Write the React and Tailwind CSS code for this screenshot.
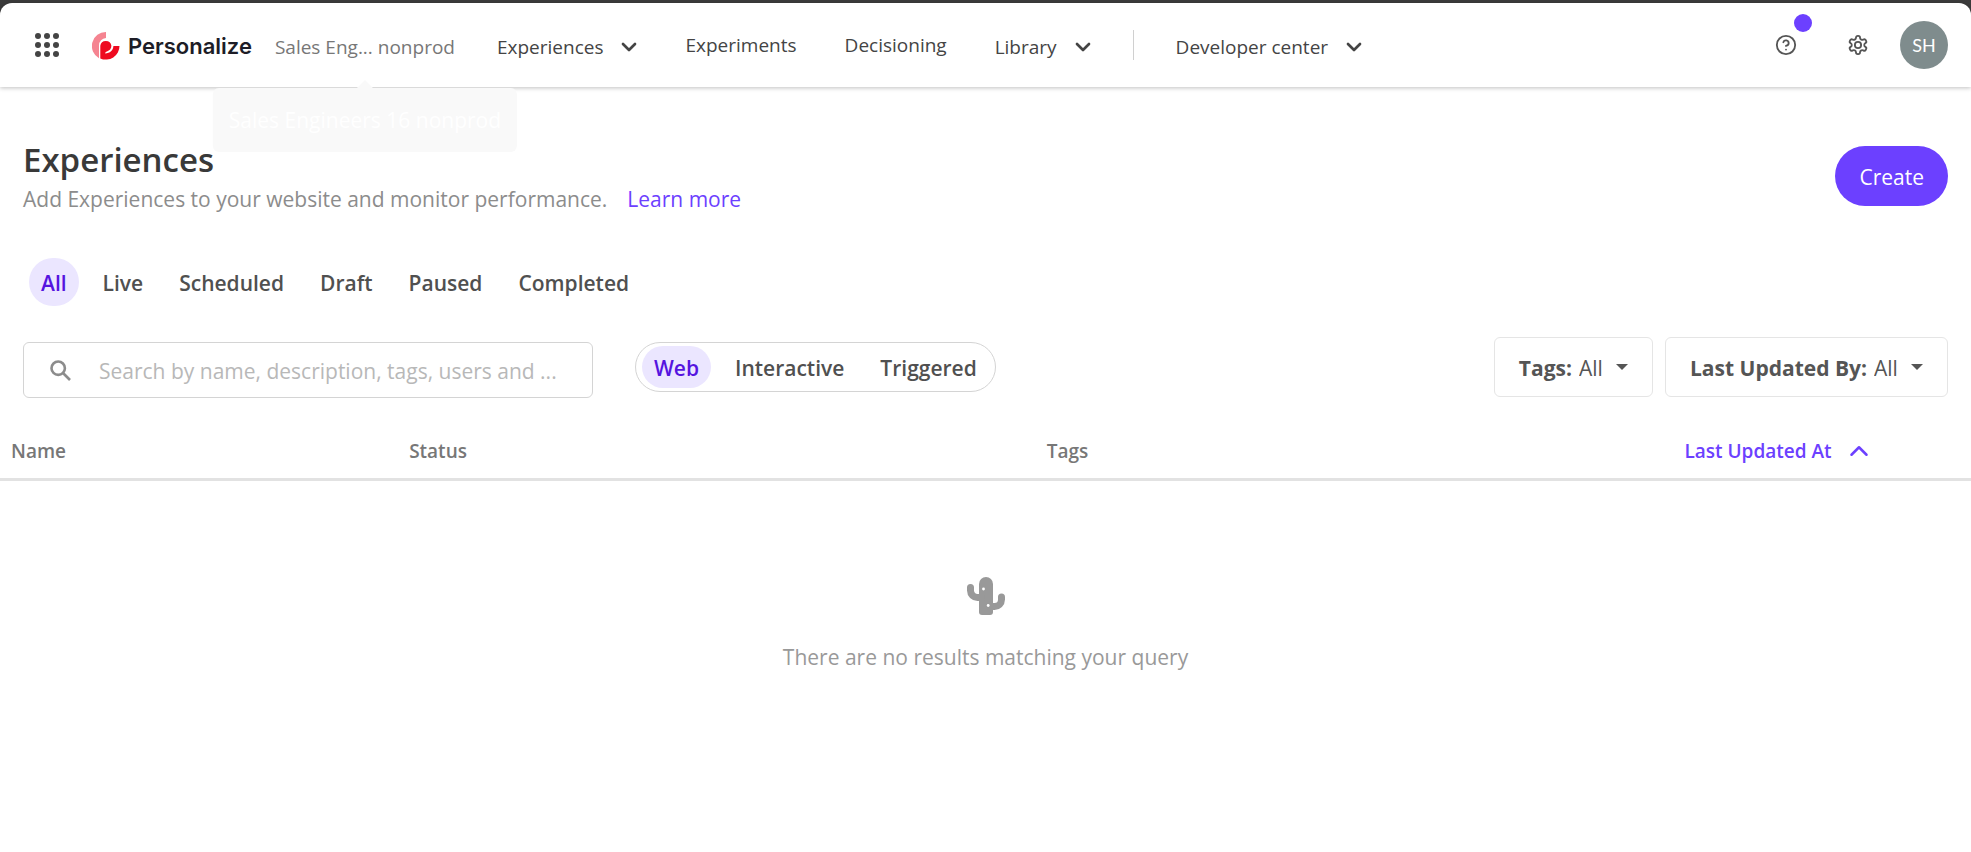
import { ChevronDown, ChevronUp, CircleHelp } from "lucide-react";

function Logo() {
  return (
    <svg viewBox="0 0 28 28" className="size-7" aria-hidden="true">
      <path d="M14 0V6A7.5 7.5 0 0 0 7 13.5V26.2A14 14 0 0 1 14 0Z" fill="#f58491" />
      <path
        d="M8.3 26.4V13.8A5.6 5.6 0 0 1 19.4 13.8C19.4 17 17.5 18.6 15 19.4C13.8 19.8 13.2 20.4 13.2 21.4C18 21.2 21.2 18.4 21.4 14H27.5A13.6 13.6 0 0 1 8.3 26.4Z"
        fill="#ee0a20"
      />
    </svg>
  );
}

function AppGrid() {
  return (
    <svg viewBox="0 0 24 24" className="size-6" fill="#444" aria-hidden="true">
      {[3, 12, 21].map((y) => [3, 12, 21].map((x) => <circle key={x + "-" + y} cx={x} cy={y} r="3" />))}
    </svg>
  );
}

function Gear() {
  return (
    <svg
      viewBox="0 0 24 24"
      className="size-[22px]"
      fill="none"
      stroke="currentColor"
      strokeWidth="2"
      strokeLinecap="round"
      strokeLinejoin="round"
      aria-hidden="true"
    >
      <path d="M12.22 2h-.44a2 2 0 0 0-2 2v.18a2 2 0 0 1-1 1.73l-.43.25a2 2 0 0 1-2 0l-.15-.08a2 2 0 0 0-2.73.73l-.22.38a2 2 0 0 0 .73 2.73l.15.1a2 2 0 0 1 1 1.72v.51a2 2 0 0 1-1 1.74l-.15.09a2 2 0 0 0-.73 2.73l.22.38a2 2 0 0 0 2.73.73l.15-.08a2 2 0 0 1 2 0l.43.25a2 2 0 0 1 1 1.73V20a2 2 0 0 0 2 2h.44a2 2 0 0 0 2-2v-.18a2 2 0 0 1 1-1.73l.43-.25a2 2 0 0 1 2 0l.15.08a2 2 0 0 0 2.73-.73l.22-.39a2 2 0 0 0-.73-2.73l-.15-.08a2 2 0 0 1-1-1.74v-.5a2 2 0 0 1 1-1.74l.15-.09a2 2 0 0 0 .73-2.73l-.22-.38a2 2 0 0 0-2.73-.73l-.15.08a2 2 0 0 1-2 0l-.43-.25a2 2 0 0 1-1-1.73V4a2 2 0 0 0-2-2z" />
      <circle cx="12" cy="12" r="3.4" />
    </svg>
  );
}

function Cactus() {
  return (
    <svg viewBox="0 0 38 38" className="size-[38px]" aria-hidden="true">
      <path d="M12 7a7 7 0 0 1 14 0v28a3 3 0 0 1-3 3h-8a3 3 0 0 1-3-3Z" fill="#999" />
      <path
        d="M3.5 10.5v3a7 7 0 0 0 7 7h4M34.5 20v2.5a7 7 0 0 1-7 7h-4"
        fill="none"
        stroke="#999"
        strokeWidth="7"
        strokeLinecap="round"
      />
      <circle cx="16.5" cy="12" r="1.4" fill="#fff" />
      <circle cx="21.2" cy="28.5" r="1.4" fill="#fff" />
    </svg>
  );
}

function NavMenu({ children }) {
  return (
    <button type="button" aria-haspopup="menu" className="flex items-center gap-3.5 pt-1">
      {children}
      <ChevronDown size={24} strokeWidth={2.7} className="-mr-1" aria-hidden="true" />
    </button>
  );
}

function Header() {
  return (
    <header className="relative z-10 flex h-21 items-center rounded-t-xl bg-white pr-[23px] pl-[35px] text-[19px] text-[#444] shadow-[0_1px_4px_rgba(0,0,0,0.25)]">
      <button type="button" aria-label="Apps">
        <AppGrid />
      </button>
      <a href="#home" className="ml-[33px] flex items-center gap-2 pt-0.5 font-[Inter] text-[22px] font-semibold text-[#1d1d27]">
        <Logo />
        Personalize
      </a>
      <div className="relative ml-[23px] pt-1 text-[#777]">
        Sales Eng... nonprod
        <div className="absolute top-[53px] left-1/2 flex -translate-x-1/2 flex-col items-center">
          <div className="h-2 w-4 bg-[#f9f9f9] [clip-path:polygon(50%_0,100%_100%,0_100%)]" />
          <div role="tooltip" className="rounded-md bg-[#f9f9f9] p-4 text-[21px] leading-8 whitespace-nowrap text-white">
            Sales Engineers 16 nonprod
          </div>
        </div>
      </div>
      <nav className="ml-[42px] flex items-center gap-12">
        <NavMenu>Experiences</NavMenu>
        <a href="#experiments">Experiments</a>
        <a href="#decisioning">Decisioning</a>
        <NavMenu>Library</NavMenu>
        <span className="-mx-1.5 h-[30px] w-px bg-[#d0d0d0]" />
        <NavMenu>Developer center</NavMenu>
      </nav>
      <div className="ml-auto flex items-center text-[#555]">
        <button type="button" aria-label="Help" className="relative">
          <CircleHelp size={22} />
          <span className="absolute -top-5 left-[19px] size-[18px] rounded-full bg-[#6c40ff]" />
        </button>
        <button type="button" aria-label="Settings" className="ml-[50px]">
          <Gear />
        </button>
        <button type="button" className="ml-[31px] size-12 rounded-full bg-[#7f8c8d] font-[Lato] text-lg text-white">
          SH
        </button>
      </div>
    </header>
  );
}

function Filter({ label, id }) {
  return (
    <div className="flex h-15 items-center rounded-md border border-[#e5e5e5] px-6 text-[#555]">
      <label htmlFor={id} className="pt-0.5 font-bold">
        {label}
      </label>
      <select id={id} className="ml-[7px] appearance-none bg-transparent pt-0.5">
        <option>All</option>
      </select>
      <svg viewBox="0 0 12 6" className="ml-[13px] h-1.5 w-3" fill="#555" aria-hidden="true">
        <path d="M0 0H12L6 6Z" />
      </svg>
    </div>
  );
}

const statuses = ["All", "Live", "Scheduled", "Draft", "Paused", "Completed"];
const kinds = ["Web", "Interactive", "Triggered"];

export default function App() {
  return (
    <div className="min-h-screen bg-white font-['Open_Sans',sans-serif] text-[21px] leading-8">
      <div className="bg-[#3b3b3b] pt-[3px]">
        <Header />
      </div>
      <main>
        <div className="flex items-start justify-between px-[23px] pt-12">
          <div>
            <h1 className="text-[33px] leading-[50px] font-semibold text-[#393939]">Experiences</h1>
            <p className="leading-7 text-[#8c8c8c]">
              Add Experiences to your website and monitor performance.
              <a href="#learn" className="ml-5 text-[#6c40ff]">
                Learn more
              </a>
            </p>
          </div>
          <button type="button" className="mt-[11px] h-15 rounded-full bg-[#6c40ff] px-6 pt-0.5 text-white">
            Create
          </button>
        </div>
        <div className="mt-[45px] flex gap-3 px-[29px]">
          {statuses.map((s, i) => (
            <button
              key={s}
              type="button"
              className={
                "h-12 rounded-full px-3 pt-0.5 font-semibold " +
                (i === 0 ? "bg-[#ebe6ff] text-[#5514df]" : "text-[#505050]")
              }
            >
              {s}
            </button>
          ))}
        </div>
        <div className="mt-[31px] flex items-start justify-between px-[23px]">
          <div className="flex items-start gap-[42px] pt-[5px]">
            <label className="flex h-14 w-[570px] items-center rounded-md border border-[#d4d4d4] pl-[26px]">
              <svg viewBox="0 0 21 21" className="size-[21px]" fill="none" stroke="#8c8c8c" strokeWidth="2.6" aria-hidden="true">
                <circle cx="8.2" cy="8.2" r="6.7" />
                <path d="M13 13L20 20" />
              </svg>
              <input
                type="text"
                aria-label="Search experiences"
                placeholder="Search by name, description, tags, users and ..."
                className="ml-7 min-w-0 flex-1 pt-0.5 outline-none placeholder:text-[#b8b8b8]"
              />
            </label>
            <div className="flex h-[50px] items-center gap-3 rounded-full border border-[#d4d4d4] px-1.5">
              {kinds.map((k, i) => (
                <button
                  key={k}
                  type="button"
                  className={
                    "h-[42px] rounded-full px-3 pt-0.5 font-semibold " +
                    (i === 0 ? "bg-[#ebe6ff] text-[#5514df]" : "text-[#505050]")
                  }
                >
                  {k}
                </button>
              ))}
            </div>
          </div>
          <div className="flex gap-3">
            <Filter label="Tags:" id="tags" />
            <Filter label="Last Updated By:" id="updated-by" />
          </div>
        </div>
        <table className="mt-[26px] w-full table-fixed text-left text-[19px] text-[#777]">
          <thead>
            <tr className="h-[55px] border-b-3 border-[#e2e2e2] [&>th]:px-[11px] [&>th]:font-semibold">
              <th className="w-[20.2%]">Name</th>
              <th>Status</th>
              <th>Tags</th>
              <th className="w-[15.1%] text-[#6c40ff]">
                <button type="button" className="flex items-center gap-3">
                  Last Updated At
                  <ChevronUp size={30} aria-hidden="true" />
                </button>
              </th>
            </tr>
          </thead>
          <tbody>
            <tr>
              <td colSpan={4} className="pt-24 text-center text-[21px] text-[#999]">
                <div className="flex flex-col items-center gap-[26px]">
                  <Cactus />
                  <p>There are no results matching your query</p>
                </div>
              </td>
            </tr>
          </tbody>
        </table>
      </main>
    </div>
  );
}
